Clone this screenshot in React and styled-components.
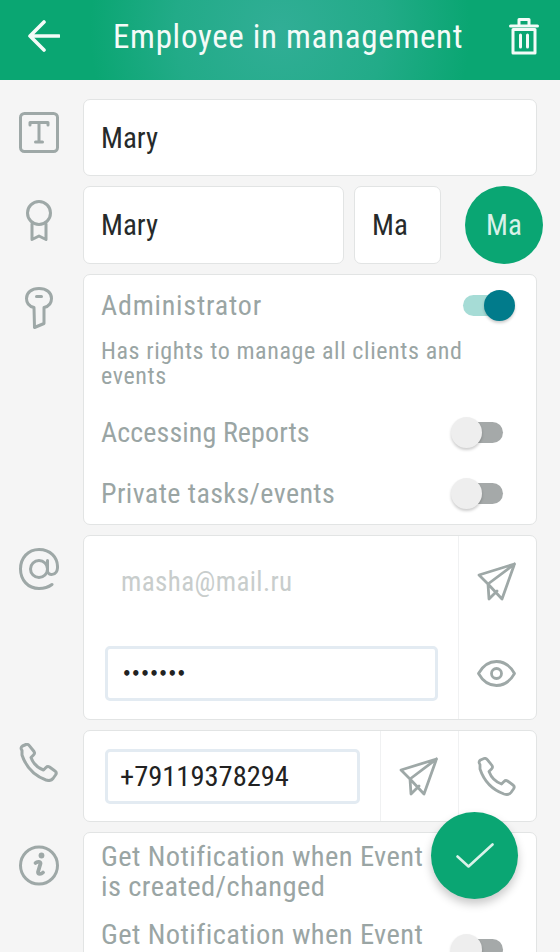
import React from "react";
import styled, { createGlobalStyle } from "styled-components";

const Global = createGlobalStyle`
  html, body { margin: 0; padding: 0; background: #f5f5f5; }
  body { font-family: "Roboto Condensed", "Roboto", "Lato", sans-serif; }
  * { box-sizing: border-box; }
`;

const Page = styled.div`
  position: relative;
  width: 560px;
  height: 952px;
  overflow: hidden;
  background: #f5f5f5;
`;

const Header = styled.header`
  height: 80px;
  display: flex;
  align-items: center;
  padding: 0 21px 8px 28px;
  background: radial-gradient(ellipse 190px 200px at 280px 30px, #31ae96 0%, #22ab88 55%, #0aa672 100%);
  color: #f4fbf8;
`;

const Title = styled.h1`
  margin: 0 auto 0 53px;
  font-size: 33px;
  font-weight: 400;
  letter-spacing: 0.7px;
  white-space: nowrap;
`;

const Form = styled.main`
  display: flex;
  flex-direction: column;
  gap: 10px;
  padding: 19px 23px 0 0;
`;

const Row = styled.section`
  display: flex;
  align-items: flex-start;
`;

const IconCol = styled.div`
  flex: 0 0 83px;
  display: flex;
  justify-content: center;
  padding: ${(p) => p.$top}px 6px 0 0;
`;

const Card = styled.div`
  background: #fff;
  border: 1px solid #e2e4e4;
  border-radius: 7px;
  flex: ${(p) => p.$flex || "1 1 auto"};
  height: ${(p) => (p.$height ? `${p.$height}px` : "auto")};
`;

const TextCard = styled(Card)`
  display: flex;
  align-items: center;
  padding-left: 17px;
  font-size: 29px;
  color: #262a2a;
`;

const Fields = styled.div`
  flex: 1 1 auto;
  display: flex;
  gap: 10px;
  align-items: stretch;
`;

const Avatar = styled.div`
  flex: 0 0 78px;
  height: 78px;
  margin: 0 -6px 0 14px;
  border-radius: 50%;
  background: #0aa673;
  color: #d8f1e8;
  font-size: 29px;
  display: flex;
  align-items: center;
  justify-content: center;
`;

const RightsCard = styled(Card)`
  height: 251px;
  padding: 0 18px 0 17px;
  color: #9aa5a4;
  display: flex;
  flex-direction: column;
`;

const SwitchRow = styled.div`
  flex: 0 0 ${(p) => p.$height}px;
  display: flex;
  align-items: center;
  justify-content: space-between;
  font-size: 28px;
  letter-spacing: ${(p) => p.$spacing}px;
  padding-right: ${(p) => p.$pad}px;
`;

const Desc = styled.p`
  margin: 4px 0 12px;
  width: 375px;
  font-size: 24px;
  line-height: 25px;
  letter-spacing: 0.6px;
`;

const Track = styled.span`
  position: relative;
  display: flex;
  flex: 0 0 52px;
  width: 52px;
  height: 31px;
  align-items: center;
  justify-content: ${(p) => (p.$on ? "flex-end" : "flex-start")};
`;

const TrackFill = styled.span`
  position: absolute;
  left: ${(p) => (p.$on ? 0 : "14px")};
  right: ${(p) => (p.$on ? "14px" : 0)};
  top: 5px;
  height: 21px;
  border-radius: 11px;
  background: ${(p) => (p.$on ? "#a6dcd6" : "#a5a9a9")};
`;

const Thumb = styled.span`
  position: relative;
  width: 31px;
  height: 31px;
  border-radius: 50%;
  background: ${(p) => (p.$on ? "#017b8b" : "#eeeeee")};
  box-shadow: 0 2px 3px rgba(0, 0, 0, 0.2);
`;

const ActionCard = styled(Card)`
  height: ${(p) => p.$height}px;
  display: flex;
  align-items: stretch;
`;

const Inputs = styled.div`
  flex: 1 1 auto;
  display: flex;
  flex-direction: column;
  padding: ${(p) => p.$pad || 0}px 20px 0 21px;
`;

const EmailText = styled.div`
  height: 92px;
  padding-left: 16px;
  display: flex;
  align-items: center;
  color: #c8cdcc;
  font-size: 27px;
  letter-spacing: 0.4px;
`;

const InputBox = styled.div`
  height: 55px;
  border: 3px solid #e3ebf2;
  border-radius: 5px;
  display: flex;
  align-items: center;
  padding-left: 12px;
  font-size: 28.5px;
  color: #222;
  margin-top: ${(p) => p.$top || 0}px;
`;

const Dots = styled.span`
  padding-left: 2px;
  letter-spacing: -0.5px;
  font-family: "DejaVu Sans", sans-serif;
  font-size: 15px;
  font-weight: 700;
`;

const ActionCol = styled.div`
  flex: 0 0 78px;
  display: flex;
  flex-direction: column;
  border-left: 1px solid #f0f1f2;
`;

const ActionCell = styled.div`
  flex: 1 1 0;
  display: flex;
  align-items: center;
  justify-content: center;
  padding-right: 2px;
`;

const NotifyCard = styled(Card)`
  height: 200px;
  padding: 9px 18px 0 17px;
  color: #9aa5a4;
  font-size: 28.5px;
  line-height: 30px;
  letter-spacing: 0.4px;
`;

const NotifyText = styled.div`
  width: 335px;
  margin-bottom: ${(p) => p.$gap || 0}px;
`;

const NotifyRow = styled.div`
  display: flex;
  justify-content: space-between;
  align-items: flex-start;
  padding-right: 15px;
`;

const ToggleWrap = styled.div`
  display: flex;
  margin-top: 14px;
`;

const Fab = styled.button`
  position: absolute;
  left: 431px;
  top: 812px;
  width: 87px;
  height: 87px;
  border: 0;
  border-radius: 50%;
  background: #0aa673;
  box-shadow: 0 5px 10px rgba(0, 0, 0, 0.22);
  display: flex;
  align-items: center;
  justify-content: center;
  padding: 0;
`;

const Svg = ({ w, h, children, color = "#9ea8a7", sw = 3 }) => (
  <svg width={w} height={h} viewBox={`0 0 ${w} ${h}`} fill="none" stroke={color} strokeWidth={sw} strokeLinecap="round" strokeLinejoin="round">
    {children}
  </svg>
);

const BackIcon = () => (
  <Svg w={32} h={32} color="#f4fbf8" sw={3.6}>
    <path d="M2 16H31M16 2L2 16L16 30" />
  </Svg>
);

const TrashIcon = () => (
  <Svg w={30} h={38} color="#f4fbf8" sw={3}>
    <path d="M1.5 9H28.5M10 8V2.5H20V8M4 12.5V36H26V12.5H4M11.5 18V30M18.5 18V30" />
  </Svg>
);

const TextIcon = () => (
  <Svg w={40} h={41} sw={3}>
    <rect x="1.5" y="1.5" width="37" height="38" rx="4" />
    <path d="M11 13V10.5H29V13M20 11V30M16.5 30H23.5" />
  </Svg>
);

const RibbonIcon = () => (
  <Svg w={28} h={42} sw={3}>
    <circle cx="14" cy="13" r="11.5" />
    <path d="M7 24V39.5L14 36L21 39.5V24" />
  </Svg>
);

const KeyIcon = () => (
  <Svg w={28} h={42} sw={3}>
    <path d="M9 20.5C4.5 19.5 1.5 16.5 1.5 11.5C1.5 5.5 6.5 1.5 14 1.5C21.5 1.5 26.5 5.5 26.5 11.5C26.5 16.5 23.5 19.5 19 20.5V36.5L9.5 40.5Z" />
    <path d="M11.5 9.5H16.5" />
  </Svg>
);

const AtIcon = () => (
  <Svg w={40} h={42} sw={3}>
    <circle cx="20" cy="21" r="8.5" />
    <path d="M28.5 12.5V23C28.5 28 38 28 38.5 20C39 9 31 1.5 20 1.5C9 1.5 1.5 10 1.5 21C1.5 32 9 40.5 20 40.5C25 40.5 29 39.5 33 36.5" />
  </Svg>
);

const PlaneIcon = () => (
  <Svg w={39} h={39} sw={2.8}>
    <path d="M37.5 2L2 13L11 22M37.5 2L11 22L12 37L20 29M37.5 2L25 37L11 22" />
  </Svg>
);

const EyeIcon = () => (
  <Svg w={39} h={27} sw={2.8}>
    <path d="M1.5 13.5C6 5.5 12 1.5 19.5 1.5C27 1.5 33 5.5 37.5 13.5C33 21.5 27 25.5 19.5 25.5C12 25.5 6 21.5 1.5 13.5Z" />
    <circle cx="19.5" cy="13.5" r="5" />
  </Svg>
);

const PhoneIcon = ({ sw = 3 }) => (
  <Svg w={39} h={39} sw={sw}>
    <path d="M3 7.5C1.5 5.5 2 4 3.5 3L7 1.5C8.5 1 9.5 1.5 10.5 2.8L15 8.5C16 10 15.5 11 14.5 12L12 14.5C14 20 19 25 24.5 27L27 24.5C28 23.5 29.3 23.3 30.5 24L36 28C37.5 29 37.5 30.5 36.5 32L34 35.5C32.5 37.5 30 38 27 37C16 33 7 24 3 12Z" />
  </Svg>
);

const InfoIcon = () => (
  <Svg w={40} h={41} sw={3}>
    <circle cx="20" cy="20.5" r="18.5" />
    <path d="M16.5 18C18 16.5 21.5 16.5 21.5 18.5L19 27C18.7 29.5 22 29.5 24 27.5" strokeWidth="3.8" />
    <circle cx="22.5" cy="10.5" r="2.9" fill="#9ea8a7" stroke="none" />
  </Svg>
);

const CheckIcon = () => (
  <Svg w={38} h={25} color="#d9f2e9" sw={2.6}>
    <path d="M1.5 13.5L12.5 23.5L36.5 1.5" />
  </Svg>
);

const Toggle = ({ on }) => (
  <Track $on={on}>
    <TrackFill $on={on} />
    <Thumb $on={on} />
  </Track>
);

export default function App() {
  return (
    <Page>
      <Global />
      <Header>
        <BackIcon />
        <Title>Employee in management</Title>
        <TrashIcon />
      </Header>
      <Form>
        <Row>
          <IconCol $top={13}><TextIcon /></IconCol>
          <TextCard $height={77}>Mary</TextCard>
        </Row>
        <Row>
          <IconCol $top={14}><RibbonIcon /></IconCol>
          <Fields>
            <TextCard $flex="1 1 auto" $height={78}>Mary</TextCard>
            <TextCard $flex="0 0 87px" $height={78}>Ma</TextCard>
            <Avatar>Ma</Avatar>
          </Fields>
        </Row>
        <Row>
          <IconCol $top={13}><KeyIcon /></IconCol>
          <RightsCard>
            <SwitchRow $height={60} $pad={3} $spacing={0.8}>
              <span>Administrator</span>
              <Toggle on />
            </SwitchRow>
            <Desc>Has rights to manage all clients and events</Desc>
            <SwitchRow $height={62} $pad={15} $spacing={0.1}>
              <span>Accessing Reports</span>
              <Toggle />
            </SwitchRow>
            <SwitchRow $height={61} $pad={15} $spacing={0.4}>
              <span>Private tasks/events</span>
              <Toggle />
            </SwitchRow>
          </RightsCard>
        </Row>
        <Row>
          <IconCol $top={13}><AtIcon /></IconCol>
          <ActionCard $height={185}>
            <Inputs>
              <EmailText>masha@mail.ru</EmailText>
              <InputBox $top={18}><Dots>•••••••</Dots></InputBox>
            </Inputs>
            <ActionCol>
              <ActionCell><PlaneIcon /></ActionCell>
              <ActionCell><EyeIcon /></ActionCell>
            </ActionCol>
          </ActionCard>
        </Row>
        <Row>
          <IconCol $top={13}><PhoneIcon /></IconCol>
          <ActionCard $height={92}>
            <Inputs $pad={18}>
              <InputBox>+79119378294</InputBox>
            </Inputs>
            <ActionCol><ActionCell><PlaneIcon /></ActionCell></ActionCol>
            <ActionCol><ActionCell><PhoneIcon sw={2.8} /></ActionCell></ActionCol>
          </ActionCard>
        </Row>
        <Row>
          <IconCol $top={13}><InfoIcon /></IconCol>
          <NotifyCard>
            <NotifyText $gap={18}>Get Notification when Event is created/changed</NotifyText>
            <NotifyRow>
              <NotifyText>Get Notification when Event</NotifyText>
              <ToggleWrap><Toggle /></ToggleWrap>
            </NotifyRow>
          </NotifyCard>
        </Row>
      </Form>
      <Fab aria-label="Save"><CheckIcon /></Fab>
    </Page>
  );
}
